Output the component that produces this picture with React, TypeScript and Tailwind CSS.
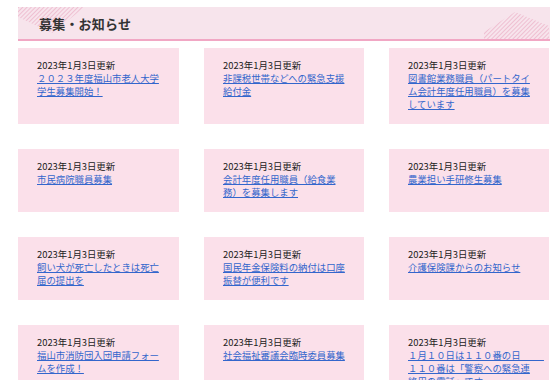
import React from "react";

// お知らせ一覧
interface Notice {
  date: string;
  title: React.ReactNode;
}

const notices: Notice[] = [
  { date: "2023年1月3日更新", title: "２０２３年度福山市老人大学学生募集開始！" },
  { date: "2023年1月3日更新", title: "非課税世帯などへの緊急支援給付金" },
  { date: "2023年1月3日更新", title: "図書館業務職員（パートタイム会計年度任用職員）を募集しています" },
  { date: "2023年1月3日更新", title: "市民病院職員募集" },
  { date: "2023年1月3日更新", title: "会計年度任用職員（給食業務）を募集します" },
  { date: "2023年1月3日更新", title: "農業担い手研修生募集" },
  { date: "2023年1月3日更新", title: "飼い犬が死亡したときは死亡届の提出を" },
  { date: "2023年1月3日更新", title: "国民年金保険料の納付は口座振替が便利です" },
  { date: "2023年1月3日更新", title: "介護保険課からのお知らせ" },
  { date: "2023年1月3日更新", title: "福山市消防団入団申請フォームを作成！" },
  { date: "2023年1月3日更新", title: "社会福祉審議会臨時委員募集" },
  {
    date: "2023年1月3日更新",
    title: (
      <>
        <span className="whitespace-nowrap">{"１月１０日は１１０番の日\u3000\u3000\u2002"}</span>
        <br />
        １１０番は「警察への緊急連絡用の電話」です
      </>
    ),
  },
];

const Stripes: React.FC<{ id: string; points: string; w: number; h: number }> = ({ id, points, w, h }) => (
  <svg width={w} height={h} viewBox={`0 0 ${w} ${h}`}>
    <defs>
      <pattern id={id} width="3" height="3" patternUnits="userSpaceOnUse" patternTransform="rotate(45)">
        <line x1="0" y1="0" x2="0" y2="3" stroke="#e9a6c0" strokeWidth="1.2" />
      </pattern>
    </defs>
    <polygon points={points} fill={`url(#${id})`} />
  </svg>
);

export default function App() {
  return (
    <div
      className="w-[554px] h-[380px] overflow-hidden bg-white pl-[18px] pr-[4px] pt-[7px]"
      style={{ fontFamily: '"Noto Sans CJK JP", "Noto Sans", sans-serif' }}
    >
      {/* 見出し */}
      <div className="relative h-[34px] bg-[#f7e4ec] border-b-2 border-[#f1a7c4] flex items-center pl-[21px]">
        <div className="absolute left-0 top-0">
          <Stripes id="st-l" w={68} h={27} points="0,0 67,0 34,26 0,10" />
        </div>
        <div className="absolute right-0 bottom-0">
          <Stripes id="st-r" w={66} h={27} points="0,20 31,0 65,14 65,27 0,27" />
        </div>
        <h2 className="relative text-[13px] font-bold text-[#333] leading-none tracking-[0.2px]">募集・お知らせ</h2>
      </div>

      {/* カード一覧 */}
      <div className="grid grid-cols-[161px_160px_160px] gap-x-[25px] gap-y-[25px] mt-[7px]">
        {notices.map((n, i) => (
          <div key={i} className="bg-[#fbe0ea] pl-[19px] pr-[15px] pt-[10px] pb-[13px] text-[9.4px] leading-[13px]">
            <p className="text-[#222] leading-[14px]">{n.date}</p>
            <a href="#" className="text-[#3366cc] underline underline-offset-[1px]">
              {n.title}
            </a>
          </div>
        ))}
      </div>
    </div>
  );
}
